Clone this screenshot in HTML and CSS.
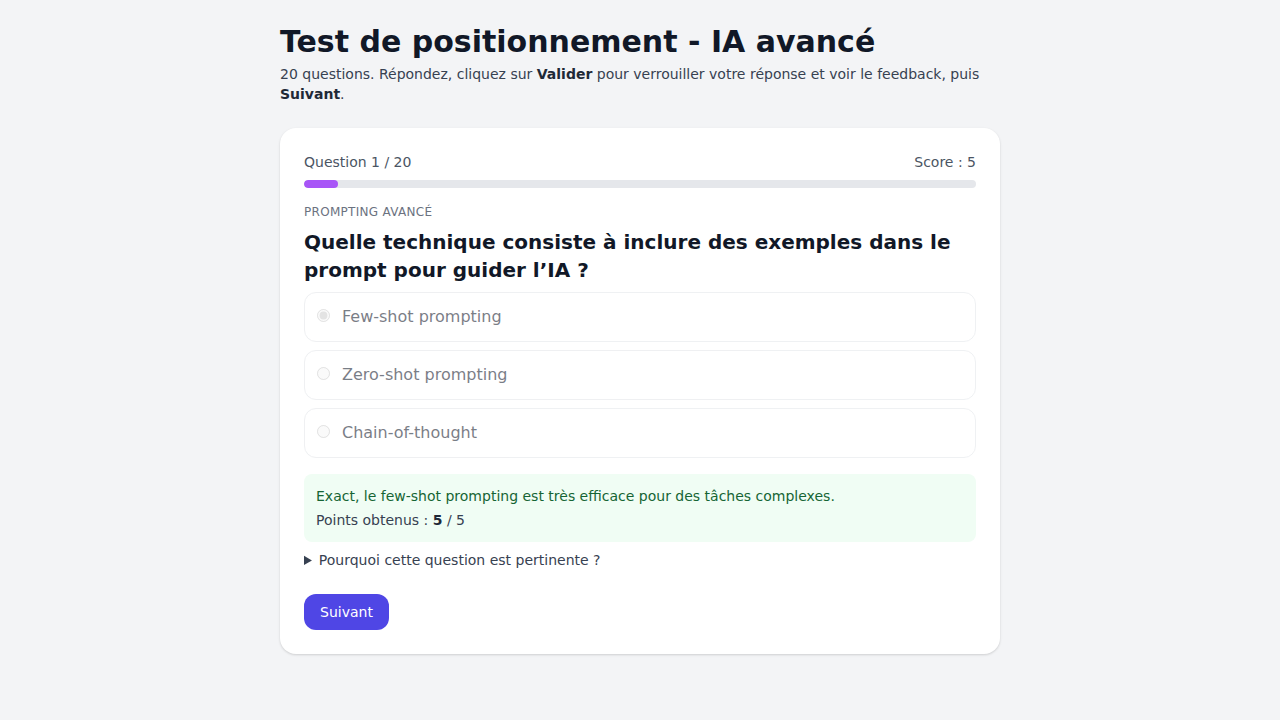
FILE: index.html
```html
<!DOCTYPE html>
<html lang="fr">
<head>
<meta charset="utf-8">
<title>Test de positionnement - IA avancé</title>
<link rel="stylesheet" href="styles.css">
</head>
<body>
<main class="page">
  <header class="intro">
    <h1 class="title">Test de positionnement - IA avancé</h1>
    <p class="subtitle">20 questions. Répondez, cliquez sur <strong>Valider</strong> pour verrouiller votre réponse et voir le feedback, puis <strong>Suivant</strong>.</p>
  </header>
  <section class="card">
    <div class="meta">
      <span>Question 1 / 20</span>
      <span>Score : 5</span>
    </div>
    <div class="track"><div class="fill" style="width:5%"></div></div>
    <div class="category">Prompting avancé</div>
    <h2 class="question">Quelle technique consiste à inclure des exemples dans le prompt pour guider l’IA ?</h2>
    <div class="options">
      <label class="option"><input type="radio" name="q" checked disabled><span>Few-shot prompting</span></label>
      <label class="option"><input type="radio" name="q" disabled><span>Zero-shot prompting</span></label>
      <label class="option"><input type="radio" name="q" disabled><span>Chain-of-thought</span></label>
    </div>
    <div class="feedback">
      <p class="fb-text">Exact, le few-shot prompting est très efficace pour des tâches complexes.</p>
      <p class="fb-points">Points obtenus : <strong>5</strong> / 5</p>
    </div>
    <details class="why">
      <summary>Pourquoi cette question est pertinente ?</summary>
    </details>
    <button class="btn" type="button">Suivant</button>
  </section>
</main>
</body>
</html>
```
FILE: styles.css
```css
* { box-sizing: border-box; }
html, body { margin: 0; padding: 0; }
body {
  background: #f3f4f6;
  font-family: "DejaVu Sans", sans-serif;
  color: #1f2937;
}
.page {
  max-width: 720px;
  margin: 0 auto;
  padding: 24px 0;
}
.title {
  margin: 0;
  font-size: 30px;
  line-height: 36px;
  font-weight: 700;
  color: #111827;
}
.subtitle {
  margin: 4px 0 0;
  font-size: 14px;
  line-height: 20px;
  color: #374151;
}
.subtitle strong { color: #1f2937; }
.card {
  margin-top: 24px;
  background: #fff;
  border-radius: 16px;
  padding: 24px;
  box-shadow: 0 1px 3px rgba(0,0,0,0.1), 0 1px 2px rgba(0,0,0,0.06);
}
.meta {
  display: flex;
  justify-content: space-between;
  font-size: 14px;
  line-height: 20px;
  color: #4b5563;
}
.track {
  margin-top: 8px;
  height: 8px;
  background: #e5e7eb;
  border-radius: 9999px;
  overflow: hidden;
}
.fill {
  height: 100%;
  background: #a855f7;
  border-radius: 9999px;
}
.category {
  margin-top: 16px;
  font-size: 12px;
  line-height: 16px;
  text-transform: uppercase;
  letter-spacing: 0.025em;
  color: #6b7280;
}
.question {
  margin: 8px 0 0;
  font-size: 20px;
  line-height: 28px;
  font-weight: 700;
  color: #111827;
}
.options {
  margin-top: 8px;
  display: flex;
  flex-direction: column;
  gap: 8px;
}
.option {
  display: flex;
  align-items: center;
  gap: 12px;
  padding: 12px;
  border: 1px solid #e5e7eb;
  border-radius: 12px;
  font-size: 16px;
  line-height: 24px;
  color: #1f2937;
  opacity: 0.6;
}
.option input { margin: 0 0 3px 0; width: 13px; height: 13px; }
.feedback {
  margin-top: 16px;
  background: #f0fdf4;
  border-radius: 8px;
  padding: 12px;
  font-size: 14px;
  line-height: 20px;
}
.feedback p { margin: 0; }
.fb-text { color: #166534; }
.fb-points { margin-top: 4px !important; color: #374151; }
.fb-points strong { color: #1f2937; }
.why {
  margin-top: 8px;
  font-size: 14px;
  line-height: 20px;
  color: #374151;
}
.why summary { cursor: pointer; }
.btn {
  margin-top: 24px;
  display: inline-block;
  background: #4f46e5;
  color: #fff;
  border: 0;
  border-radius: 12px;
  padding: 8px 16px;
  font-family: "DejaVu Sans", sans-serif;
  font-size: 14px;
  line-height: 20px;
}
```
